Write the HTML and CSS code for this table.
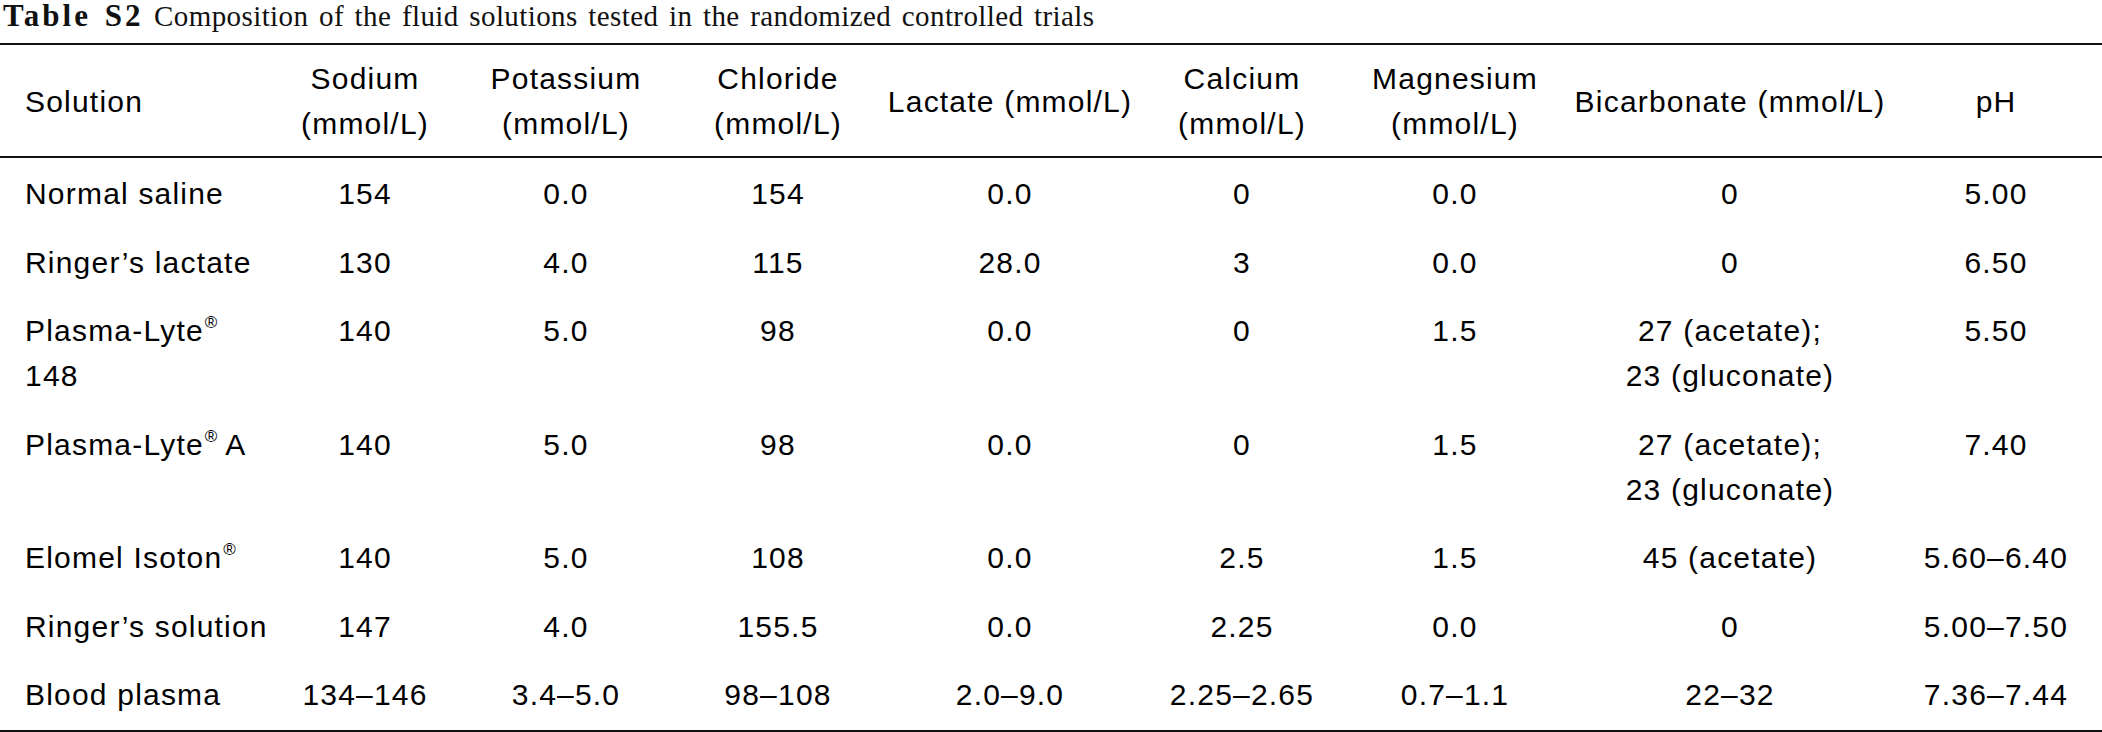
FILE: index.html
```html
<!DOCTYPE html>
<html lang="en">
<head>
<meta charset="utf-8">
<title>Table S2</title>
<link rel="stylesheet" href="styles.css">
</head>
<body>
<table class="fluids">
  <caption class="fluids-caption"><b class="label">Table S2</b> Composition of the fluid solutions tested in the randomized controlled trials</caption>
  <thead>
    <tr>
      <th class="col-sol">Solution</th>
      <th class="col-na">Sodium<br>(mmol/L)</th>
      <th class="col-k">Potassium<br>(mmol/L)</th>
      <th class="col-cl">Chloride<br>(mmol/L)</th>
      <th class="col-lac">Lactate (mmol/L)</th>
      <th class="col-ca">Calcium<br>(mmol/L)</th>
      <th class="col-mg">Magnesium<br>(mmol/L)</th>
      <th class="col-bic">Bicarbonate (mmol/L)</th>
      <th class="col-ph">pH</th>
    </tr>
  </thead>
  <tbody>
    <tr>
      <td>Normal saline</td><td>154</td><td>0.0</td><td>154</td><td>0.0</td><td>0</td><td>0.0</td><td>0</td><td>5.00</td>
    </tr>
    <tr>
      <td>Ringer’s lactate</td><td>130</td><td>4.0</td><td>115</td><td>28.0</td><td>3</td><td>0.0</td><td>0</td><td>6.50</td>
    </tr>
    <tr>
      <td>Plasma-Lyte<sup class="reg">®</sup><br>148</td><td>140</td><td>5.0</td><td>98</td><td>0.0</td><td>0</td><td>1.5</td><td>27 (acetate);<br>23 (gluconate)</td><td>5.50</td>
    </tr>
    <tr>
      <td>Plasma-Lyte<sup class="reg">®</sup> A</td><td>140</td><td>5.0</td><td>98</td><td>0.0</td><td>0</td><td>1.5</td><td>27 (acetate);<br>23 (gluconate)</td><td>7.40</td>
    </tr>
    <tr>
      <td>Elomel Isoton<sup class="reg">®</sup></td><td>140</td><td>5.0</td><td>108</td><td>0.0</td><td>2.5</td><td>1.5</td><td>45 (acetate)</td><td>5.60–6.40</td>
    </tr>
    <tr>
      <td>Ringer’s solution</td><td>147</td><td>4.0</td><td>155.5</td><td>0.0</td><td>2.25</td><td>0.0</td><td>0</td><td>5.00–7.50</td>
    </tr>
    <tr>
      <td>Blood plasma</td><td>134–146</td><td>3.4–5.0</td><td>98–108</td><td>2.0–9.0</td><td>2.25–2.65</td><td>0.7–1.1</td><td>22–32</td><td>7.36–7.44</td>
    </tr>
  </tbody>
</table>
</body>
</html>
```
FILE: styles.css
```css
html, body {
  margin: 0;
  padding: 0;
  background: #ffffff;
}

.fluids {
  width: 2102px;
  border-collapse: collapse;
  table-layout: fixed;
  color: #000;
  font-family: "Liberation Sans", Arial, sans-serif;
  font-size: 30px;
  letter-spacing: 1.2px;
  border-bottom: 2px solid #111;
}

.fluids-caption {
  caption-side: top;
  text-align: left;
  font-family: "Liberation Serif", "Times New Roman", serif;
  font-size: 29px;
  line-height: 32px;
  letter-spacing: 0.4px;
  word-spacing: 3px;
  padding: 0 0 11px 3px;
  white-space: nowrap;
  color: #111;
}

.fluids-caption .label {
  font-size: 31px;
  font-weight: bold;
  letter-spacing: 3px;
}

.fluids th,
.fluids td {
  box-sizing: border-box;
  padding: 0;
  text-align: center;
  white-space: nowrap;
  line-height: 45px;
  font-weight: normal;
}

.fluids thead th {
  vertical-align: middle;
  padding-top: 11px;
  padding-bottom: 10px;
  border-top: 2px solid #111;
  border-bottom: 2px solid #111;
}

.fluids tbody td {
  vertical-align: top;
  padding-top: 13px;
  padding-bottom: 10.5px;
}

.fluids tbody tr:last-child td {
  padding-bottom: 13px;
}

.fluids th:first-child,
.fluids td:first-child {
  text-align: left;
  padding-left: 25px;
}

/* small centring shifts for some columns */
.fluids th:nth-child(3),
.fluids td:nth-child(3) {
  padding-left: 12px;
}

.fluids th:nth-child(4),
.fluids td:nth-child(4) {
  padding-left: 16px;
}

.fluids th:nth-child(7),
.fluids td:nth-child(7) {
  padding-left: 16px;
}

.col-sol { width: 290px; }
.col-na  { width: 150px; }
.col-k   { width: 240px; }
.col-cl  { width: 180px; }
.col-lac { width: 300px; }
.col-ca  { width: 164px; }
.col-mg  { width: 246px; }
.col-bic { width: 320px; }
.col-ph  { width: 212px; }

.reg {
  font-size: 17px;
  line-height: 0;
  vertical-align: 13px;
  letter-spacing: 0;
  margin-left: 1px;
}
```
